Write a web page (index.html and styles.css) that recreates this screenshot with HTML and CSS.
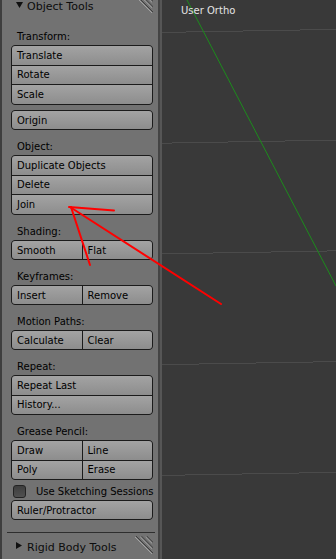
FILE: index.html
```
<!DOCTYPE html>
<html>
<head>
<meta charset="utf-8">
<link rel="stylesheet" href="styles.css">
</head>
<body>
<div class="app">
  <aside class="shelf">
    <div class="panel-head top">
      <svg class="tri-down" width="7" height="6" viewBox="0 0 7 6"><polygon points="0,0 7,0 3.5,6" fill="#111"/></svg>
      <span class="title">Object Tools</span>
      <svg class="grip" width="18" height="18" viewBox="0 0 18 18">
        <g stroke="rgba(0,0,0,0.45)" stroke-width="1" fill="none">
          <path d="M1 0L18 17M6.3 0L18 11.7M11.7 0L18 6.3"/>
        </g>
        <g stroke="rgba(255,255,255,0.35)" stroke-width="1" fill="none">
          <path d="M0 1L17 18M5.3 1L17 12.7M10.7 1L17 7.3"/>
        </g>
      </svg>
    </div>

    <div class="panel-body">
      <section class="sec">
        <div class="label">Transform:</div>
        <div class="grp c3">
          <div class="btn">Translate</div>
          <div class="btn">Rotate</div>
          <div class="btn">Scale</div>
        </div>
        <div class="grp c1">
          <div class="btn">Origin</div>
        </div>
      </section>

      <section class="sec">
        <div class="label">Object:</div>
        <div class="grp c3">
          <div class="btn">Duplicate Objects</div>
          <div class="btn">Delete</div>
          <div class="btn">Join</div>
        </div>
      </section>

      <section class="sec">
        <div class="label">Shading:</div>
        <div class="grp r2">
          <div class="btn">Smooth</div>
          <div class="btn">Flat</div>
        </div>
      </section>

      <section class="sec">
        <div class="label">Keyframes:</div>
        <div class="grp r2">
          <div class="btn">Insert</div>
          <div class="btn">Remove</div>
        </div>
      </section>

      <section class="sec">
        <div class="label">Motion Paths:</div>
        <div class="grp r2">
          <div class="btn">Calculate</div>
          <div class="btn">Clear</div>
        </div>
      </section>

      <section class="sec">
        <div class="label">Repeat:</div>
        <div class="grp c2">
          <div class="btn">Repeat Last</div>
          <div class="btn">History...</div>
        </div>
      </section>

      <section class="sec">
        <div class="label">Grease Pencil:</div>
        <div class="grp g22">
          <div class="btn">Draw</div>
          <div class="btn">Line</div>
          <div class="btn">Poly</div>
          <div class="btn">Erase</div>
        </div>
        <div class="check-row">
          <span class="check"></span>
          <span>Use Sketching Sessions</span>
        </div>
        <div class="grp c1 ruler">
          <div class="btn">Ruler/Protractor</div>
        </div>
      </section>
    </div>

    <div class="sep"></div>

    <div class="panel-head">
      <svg class="tri-right" width="6" height="7" viewBox="0 0 6 7"><polygon points="0,0 6,3.5 0,7" fill="#111"/></svg>
      <span class="title">Rigid Body Tools</span>
      <svg class="grip" width="18" height="18" viewBox="0 0 18 18">
        <g stroke="rgba(0,0,0,0.45)" stroke-width="1" fill="none">
          <path d="M1 0L18 17M6.3 0L18 11.7M11.7 0L18 6.3"/>
        </g>
        <g stroke="rgba(255,255,255,0.35)" stroke-width="1" fill="none">
          <path d="M0 1L17 18M5.3 1L17 12.7M10.7 1L17 7.3"/>
        </g>
      </svg>
    </div>
  </aside>

  <div class="divider"></div>

  <main class="view">
    <svg class="grid" width="174" height="559" viewBox="0 0 174 559">
      <g stroke="#4b4b4b" stroke-width="1" fill="none">
        <path d="M0 32.5H24M24 31.5H81M81 30.5H138M138 29.5H174"/>
        <path d="M0 143.5H10M10 142.5H66M66 141.5H123M123 140.5H174"/>
        <path d="M0 253.5H51M51 252.5H109M109 251.5H165M165 250.5H174"/>
        <path d="M0 364.5H37M37 363.5H94M94 362.5H151M151 361.5H174"/>
        <path d="M0 475.5H23M23 474.5H80M80 473.5H137M137 472.5H174"/>
      </g>
      <line x1="25" y1="0" x2="174" y2="286" stroke="#1c8c1c" stroke-width="1"/>
    </svg>
    <div class="view-label">User Ortho</div>
  </main>

  <svg class="annot" width="336" height="559" viewBox="0 0 336 559">
    <g stroke="#ff0000" stroke-width="2" stroke-linecap="round" fill="none">
      <line x1="69" y1="207" x2="114" y2="210.5"/>
      <line x1="71" y1="207" x2="90" y2="265"/>
      <line x1="70" y1="207" x2="221" y2="304"/>
    </g>
  </svg>
</div>
</body>
</html>
```

FILE: styles.css
```
* {
  box-sizing: border-box;
}

html,
body {
  margin: 0;
  padding: 0;
  width: 336px;
  height: 559px;
  overflow: hidden;
  background: #393939;
}

body {
  font-family: "DejaVu Sans", "Liberation Sans", sans-serif;
  font-size: 10px;
  color: #000;
}

.app {
  position: relative;
  display: flex;
  width: 336px;
  height: 559px;
  overflow: hidden;
}

/* ---------- tool shelf ---------- */

.shelf {
  flex: none;
  width: 158px;
  display: flex;
  flex-direction: column;
  background: #727272;
  border-left: 2px solid #3e3e3e;
  padding: 0 5px 0 9px;
}

.panel-head {
  flex: none;
  height: 28px;
  display: flex;
  align-items: center;
  padding-left: 5px;
  font-size: 11px;
  color: #0c0c0c;
}

.panel-head.top {
  margin-top: -8px;
}

.tri-down {
  flex: none;
  align-self: flex-start;
  margin-top: 10px;
  margin-right: 4px;
}

.tri-right {
  flex: none;
  align-self: flex-start;
  margin-top: 9px;
  margin-left: 0;
  margin-right: 5px;
}

.title {
  white-space: nowrap;
}

.grip {
  flex: none;
  align-self: flex-start;
  margin-left: auto;
  margin-top: 3px;
}

.sec {
  margin-top: 8px;
}

.label {
  height: 17px;
  line-height: 17px;
  padding-left: 6px;
  white-space: nowrap;
}

.grp {
  display: grid;
  gap: 1px;
  background: #1b1b1b;
  border: 1px solid #1b1b1b;
  border-radius: 4px;
  overflow: hidden;
}

.grp + .grp {
  margin-top: 5px;
}

.grp.c1 {
  height: 20px;
}

.grp.c2 {
  height: 40px;
  grid-template-rows: 1fr 1fr;
}

.grp.c3 {
  height: 60px;
  grid-template-rows: 1fr 1fr 1fr;
}

.grp.r2 {
  height: 20px;
  grid-template-columns: 1fr 1fr;
}

.grp.g22 {
  height: 40px;
  grid-template-columns: 1fr 1fr;
  grid-template-rows: 1fr 1fr;
}

.btn {
  display: flex;
  align-items: center;
  padding-left: 5px;
  white-space: nowrap;
  overflow: hidden;
  background: linear-gradient(#a3a3a3, #8d8d8d);
}

.check-row {
  height: 14px;
  margin-top: 4px;
  display: flex;
  align-items: center;
  gap: 10px;
  padding-left: 2px;
  white-space: nowrap;
}

.check {
  flex: none;
  width: 13px;
  height: 13px;
  border: 1px solid #232323;
  border-radius: 3px;
  background: linear-gradient(#3e3e3e, #505050);
}

.grp.ruler {
  margin-top: 2px;
}

.sep {
  flex: none;
  height: 1px;
  margin: 12px -2px 0 -4px;
  background: #2e2e2e;
}

/* ---------- divider ---------- */

.divider {
  flex: none;
  width: 4px;
  border-left: 2px solid #444444;
  background: #565656;
}

/* ---------- 3D viewport ---------- */

.view {
  flex: 1;
  position: relative;
  background: #393939;
}

.grid {
  position: absolute;
  left: 0;
  top: 0;
}

.view-label {
  position: relative;
  padding: 4px 0 0 19px;
  line-height: 13px;
  font-size: 10px;
  color: #e4e4e4;
  white-space: nowrap;
}

.annot {
  position: absolute;
  left: 0;
  top: 0;
  pointer-events: none;
}
```
